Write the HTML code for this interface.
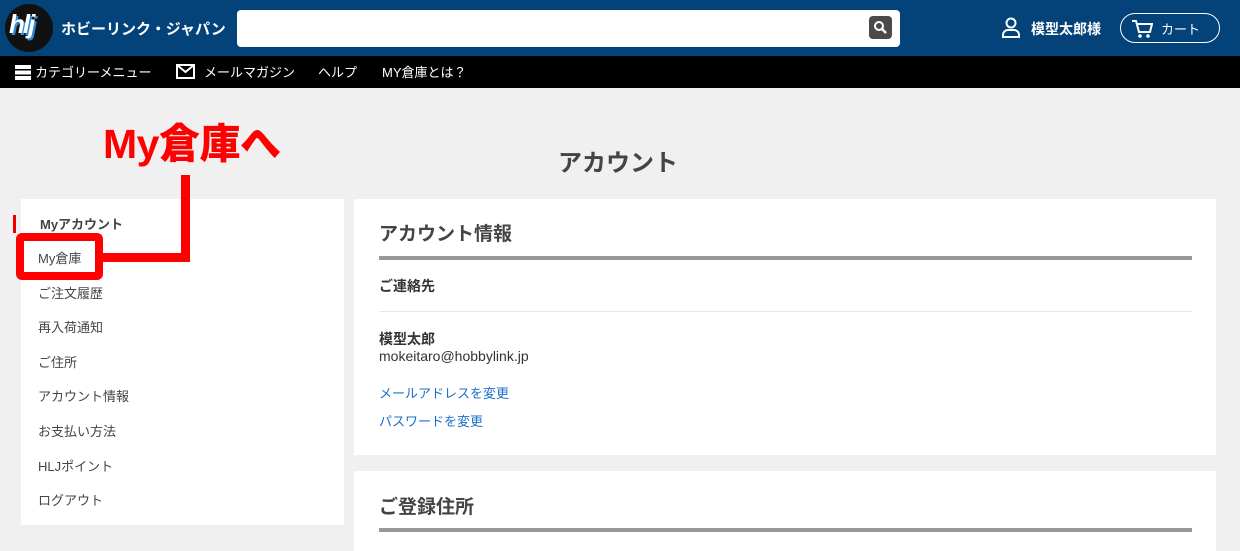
<!DOCTYPE html>
<html><head><meta charset="utf-8"><style>
*{margin:0;padding:0;box-sizing:border-box}
body{width:1240px;height:546px;overflow:hidden;background:#f0f0f0;font-family:"Liberation Sans","Noto Sans CJK JP",sans-serif;color:#333;position:relative}
.hd{position:absolute;left:0;top:0;width:1240px;height:56px;background:#03437a}
.nav{position:absolute;left:0;top:56px;width:1240px;height:32px;background:#000;color:#fff;font-size:13px}
.a{position:absolute}
.side{position:absolute;left:21px;top:199px;width:323px;height:326px;background:#fff}
.side div{position:absolute;left:17px;font-size:13px;color:#444}
.card{position:absolute;left:354px;width:862px;background:#fff}
.red{color:#f00}
</style></head><body>
<div class="hd">
 <div class="a" style="left:5px;top:4px;width:48px;height:48px;border-radius:50%;background:#111"></div>
 <div class="a" style="left:9px;top:9px;font:italic 900 26px 'Liberation Sans',sans-serif;color:#fff;text-shadow:2px 2px 0 #2e8ad8;letter-spacing:-2px">hlj</div>
 <div class="a" style="left:61px;top:18px;font-size:15px;font-weight:bold;color:#fff">ホビーリンク・ジャパン</div>
 <div class="a" style="left:237px;top:10px;width:663px;height:37px;background:#fff;border-radius:4px"></div>
 <div class="a" style="left:869px;top:16px;width:23px;height:23px;background:#4a4a4a;border-radius:4px"></div>
 <svg class="a" style="left:873px;top:20px" width="15" height="15" viewBox="0 0 15 15"><circle cx="6" cy="6" r="4" fill="none" stroke="#fff" stroke-width="2"/><path d="M9 9l4 4" stroke="#fff" stroke-width="2.5"/></svg>
 <svg class="a" style="left:1001px;top:17px" width="20" height="21" viewBox="0 0 20 21"><circle cx="10" cy="6" r="4.5" fill="none" stroke="#fff" stroke-width="2"/><path d="M2 20v-2a5 5 0 0 1 5-5h6a5 5 0 0 1 5 5v2z" fill="none" stroke="#fff" stroke-width="2"/></svg>
 <div class="a" style="left:1031px;top:19px;font-size:14px;font-weight:bold;color:#fff">模型太郎様</div>
 <div class="a" style="left:1120px;top:13px;width:100px;height:30px;border:1.5px solid #fff;border-radius:15px"></div>
 <svg class="a" style="left:1131px;top:19px" width="22" height="20" viewBox="0 0 22 20"><path d="M1 2h4l3 11h11l2-8H6" fill="none" stroke="#fff" stroke-width="2"/><circle cx="9" cy="17" r="1.8" fill="#fff"/><circle cx="17" cy="17" r="1.8" fill="#fff"/></svg>
 <div class="a" style="left:1161px;top:19px;font-size:13px;color:#fff">カート</div>
</div>
<div class="nav">
 <div class="a" style="left:15px;top:9px;width:16px;height:3.5px;background:#fff;box-shadow:0 5.5px 0 #fff,0 11px 0 #fff"></div>
 <div class="a" style="left:35px;top:6px">カテゴリーメニュー</div>
 <svg class="a" style="left:176px;top:8px" width="19" height="15" viewBox="0 0 19 15"><rect x="1" y="1" width="17" height="13" fill="none" stroke="#fff" stroke-width="2"/><path d="M1 1l8.5 7L18 1" fill="none" stroke="#fff" stroke-width="2"/></svg>
 <div class="a" style="left:204px;top:6px">メールマガジン</div>
 <div class="a" style="left:318px;top:6px">ヘルプ</div>
 <div class="a" style="left:382px;top:6px">MY倉庫とは？</div>
</div>
<div class="a" style="left:558px;top:143px;font-size:24px;font-weight:bold;color:#444">アカウント</div>
<div class="side">
 <div style="left:19px;top:15px;font-weight:bold">Myアカウント</div>
 <div style="top:49px">My倉庫</div>
 <div style="top:84px">ご注文履歴</div>
 <div style="top:118px">再入荷通知</div>
 <div style="top:153px">ご住所</div>
 <div style="top:187px">アカウント情報</div>
 <div style="top:222px">お支払い方法</div>
 <div style="top:257px">HLJポイント</div>
 <div style="top:291px">ログアウト</div>
</div>
<div class="a" style="left:13px;top:215px;width:3px;height:18px;background:#e00"></div>
<div class="card" style="top:199px;height:256px">
 <div class="a" style="left:25px;top:20px;font-size:19px;font-weight:bold;color:#444">アカウント情報</div>
 <div class="a" style="left:25px;top:57px;width:813px;height:4px;background:#999"></div>
 <div class="a" style="left:25px;top:77px;font-size:14px;font-weight:bold">ご連絡先</div>
 <div class="a" style="left:25px;top:112px;width:813px;height:1px;background:#e8e8e8"></div>
 <div class="a" style="left:25px;top:132px;font-size:14px;font-weight:bold;line-height:17px">模型太郎<br><span style="font-weight:normal">mokeitaro@hobbylink.jp</span></div>
 <div class="a" style="left:25px;top:184px;font-size:13px;color:#1a70c8">メールアドレスを変更</div>
 <div class="a" style="left:25px;top:212px;font-size:13px;color:#1a70c8">パスワードを変更</div>
</div>
<div class="card" style="top:471px;height:80px">
 <div class="a" style="left:25px;top:21px;font-size:19px;font-weight:bold;color:#444">ご登録住所</div>
 <div class="a" style="left:25px;top:57px;width:813px;height:4px;background:#999"></div>
</div>
<div class="a red" style="left:103px;top:110px;font-size:41px;font-weight:900;letter-spacing:-0.5px">My倉庫へ</div>
<div class="a" style="left:181px;top:175px;width:9px;height:87px;background:#f00"></div>
<div class="a" style="left:100px;top:253px;width:90px;height:9px;background:#f00"></div>
<div class="a" style="left:16px;top:233px;width:87px;height:47px;border:8px solid #f00;border-radius:6px"></div>
</body></html>
